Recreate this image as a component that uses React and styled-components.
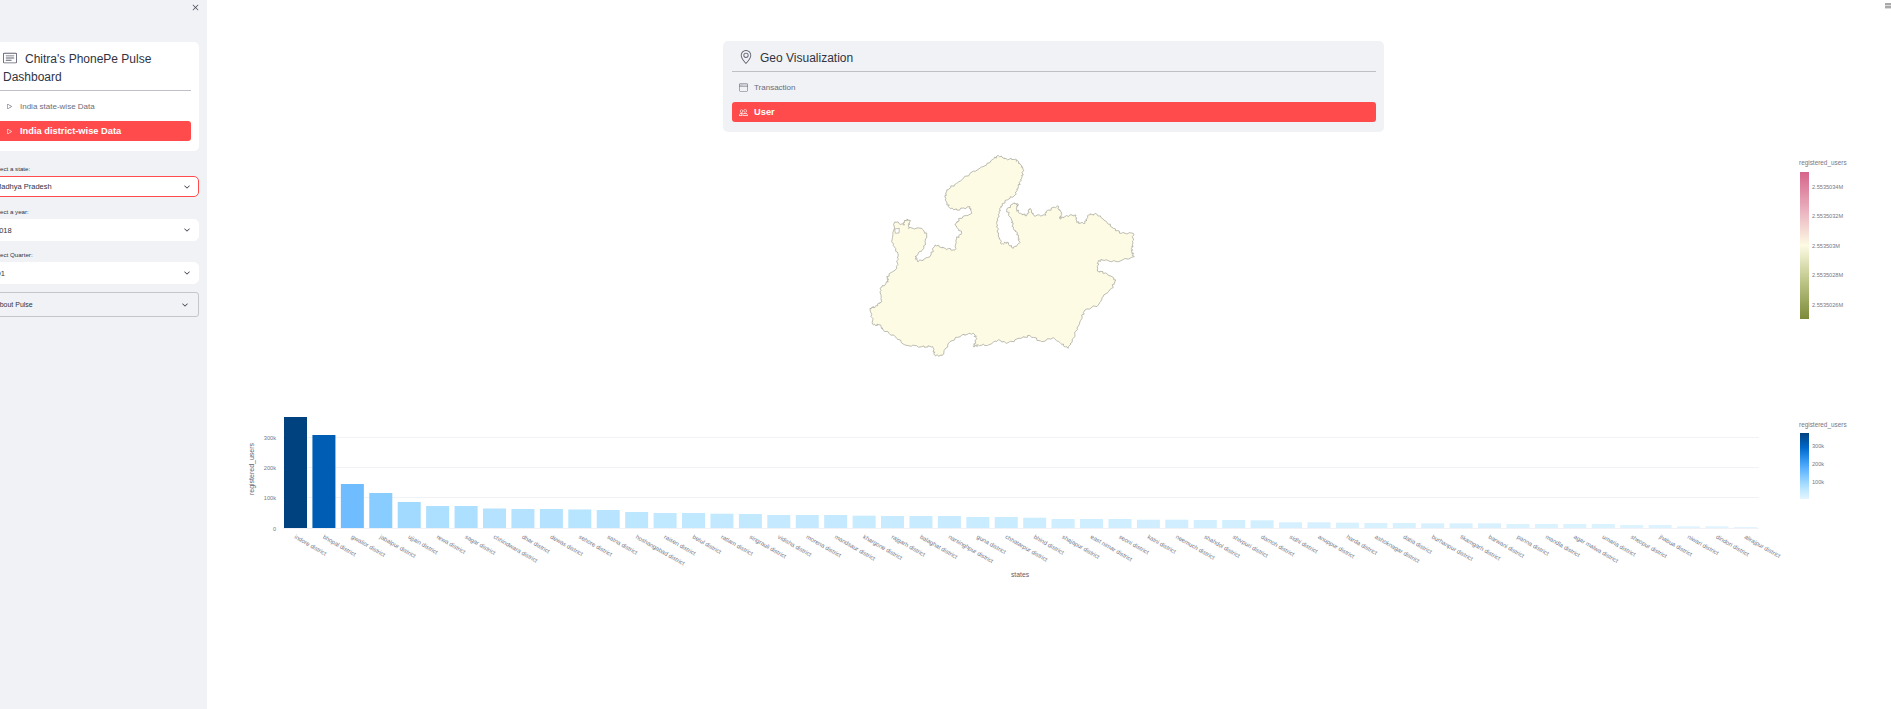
import React from 'react'
import styled, { createGlobalStyle } from 'styled-components'
import { BsCardText, BsChevronDown, BsGeoAlt, BsPeople, BsPlay, BsWindow, BsX } from 'react-icons/bs'

const GlobalStyle = createGlobalStyle`
  html, body {
    margin: 0;
    height: 100%;
    overflow: hidden;
    background: #fff;
    font-family: "Liberation Sans", Arial, sans-serif;
  }
`

const Page = styled.div`
  display: flex;
  width: 1891px;
  height: 709px;
  position: relative;
  overflow: hidden;
  background: #fff;
`

const Sidebar = styled.aside`
  width: 207px;
  flex: none;
  height: 100%;
  background: #f0f2f6;
  overflow: hidden;
`

const CloseRow = styled.div`
  height: 41px;
  padding: 1px 5px 0 0;
  display: flex;
  justify-content: flex-end;
  color: #4a4c58;
  font-size: 13px;
`

const SideInner = styled.div`
  width: 213px;
  margin-left: -14px;
  display: flex;
  flex-direction: column;
`

const MenuCard = styled.div`
  background: #fff;
  border-radius: 5px;
  padding: 8px 8px 10px;
  box-sizing: border-box;
`

const MenuTitle = styled.div`
  color: #31333f;
  font-size: ${p => p.$size}px;
  line-height: 18px;
  padding: 0 0 4px ${p => p.$indent}px;

  svg {
    vertical-align: -2px;
    margin-right: ${p => p.$iconGap}px;
    color: #5f6270;
    font-size: 14px;
  }
`

const Rule = styled.div`
  height: 1px;
  background: #bfc0c6;
  margin-bottom: 5px;
`

const MenuItem = styled.div`
  height: 20px;
  margin-top: ${p => p.$top}px;
  padding-left: ${p => p.$indent}px;
  display: flex;
  align-items: center;
  gap: ${p => p.$gap}px;
  border-radius: 3px;
  font-size: ${p => (p.$active ? 9.3 : 8)}px;
  font-weight: ${p => (p.$active ? 700 : 400)};
  color: ${p => (p.$active ? '#fff' : '#6b6d7a')};
  background: ${p => (p.$active ? '#ff4b4b' : 'transparent')};

  svg {
    font-size: 9px;
    flex: none;
  }
`

const FieldLabel = styled.div`
  font-size: 6.2px;
  line-height: 8px;
  color: #31333f;
  padding-left: 5px;
  margin: ${p => p.$top}px 0 3px;
`

const Select = styled.div`
  height: ${p => p.$height}px;
  box-sizing: border-box;
  background: #fff;
  border: 1px solid ${p => (p.$focus ? '#ff4b4b' : '#fff')};
  border-radius: 5px;
  padding: 0 8px;
  display: flex;
  align-items: center;
  justify-content: space-between;
  font-size: 7.5px;
  color: #31333f;

  svg {
    font-size: 6px;
    stroke: currentColor;
    stroke-width: 1;
  }
`

const Expander = styled(Select)`
  margin-top: 8px;
  background: #f0f2f6;
  border: 1px solid #c4c6cc;
  border-radius: 3px;
  padding-right: 10px;
  font-size: 7px;
`

const Main = styled.main`
  flex: 1;
  min-width: 0;
  display: flex;
  flex-direction: column;
  align-items: flex-start;
`

const GeoMenu = styled(MenuCard)`
  width: 661px;
  height: 91px;
  margin: 41px 0 0 516px;
  padding: 8px 8px 0 9px;
  background: #f0f2f6;
`

const ChartSvg = styled.svg`
  display: block;
  width: 1684px;
  height: ${p => p.$height}px;
  flex: none;
`

const ChartText = styled.text`
  font-family: "Liberation Sans", Arial, sans-serif;
  font-size: ${p => p.$size || 5.6}px;
  fill: ${p => p.$fill || '#767886'};
`

const CornerMenu = styled.div`
  position: absolute;
  top: 3px;
  right: 0;
  width: 6px;
  height: 6px;
  background: repeating-linear-gradient(#a9a9a9 0 2px, #dcdcdc 2px 3px);
`

const blues = ['#e4f5ff', '#c7ebff', '#a6dcff', '#83c9ff', '#60b4ff', '#3d9df3', '#1c83e1', '#0068c9', '#0054a3', '#004280']

const hexRgb = h => [1, 3, 5].map(i => parseInt(h.slice(i, i + 2), 16))

function blueAt(t) {
  const pos = Math.min(Math.max(t, 0), 1) * (blues.length - 1)
  const i = Math.min(Math.floor(pos), blues.length - 2)
  const a = hexRgb(blues[i])
  const b = hexRgb(blues[i + 1])
  const f = pos - i
  return `rgb(${a.map((v, k) => Math.round(v + (b[k] - v) * f)).join(',')})`
}

// district name + top of the bar on the page
const districts = [
  ['indore', 417], ['bhopal', 435], ['gwalior', 484], ['jabalpur', 493], ['ujjain', 502], ['rewa', 506],
  ['sagar', 506], ['chhindwara', 508.5], ['dhar', 509], ['dewas', 509], ['sehore', 509.5], ['satna', 510],
  ['hoshangabad', 512], ['raisen', 513], ['betul', 513], ['ratlam', 513.7], ['singrauli', 514], ['vidisha', 515],
  ['morena', 515], ['mandsaur', 515], ['khargone', 515.7], ['rajgarh', 516], ['balaghat', 516], ['narsinghpur', 516],
  ['guna', 517], ['chhatarpur', 517], ['bhind', 517.7], ['shajapur', 519], ['east nimar', 519], ['seoni', 519],
  ['katni', 519.7], ['neemuch', 519.7], ['shahdol', 520], ['shivpuri', 520], ['damoh', 520.3], ['sidhi', 522.3],
  ['anuppur', 522.3], ['harda', 522.7], ['ashoknagar', 523], ['datia', 523], ['burhanpur', 523.3], ['tikamgarh', 523.3],
  ['barwani', 523.3], ['panna', 524], ['mandla', 524], ['agar malwa', 524], ['umaria', 524], ['sheopur', 525],
  ['jhabua', 525], ['niwari', 526.3], ['dindori', 526.3], ['alirajpur', 527],
]

const outline = [
  [430, 42], [445, 32], [470, 42], [495, 42], [510, 55], [520, 75], [515, 100], [505, 125], [495, 150], [470, 165],
  [452, 185], [448, 205], [440, 235], [445, 270], [455, 297], [470, 292], [490, 310], [508, 295], [505, 270], [490, 250],
  [485, 225], [470, 195], [490, 175], [505, 178], [498, 192], [510, 205], [530, 212], [540, 190], [552, 212], [585, 210], [590, 198],
  [622, 183], [635, 205], [630, 222], [650, 212], [678, 210], [680, 232], [705, 235], [715, 210], [740, 207], [770, 230],
  [790, 250], [815, 265], [850, 265], [848, 300], [845, 320], [852, 335], [800, 350], [755, 345], [745, 350], [742, 378],
  [770, 385], [798, 405], [785, 430], [760, 455], [745, 480], [705, 495], [690, 530], [670, 580], [655, 610], [635, 598],
  [610, 578], [575, 590], [540, 572], [510, 580], [470, 595], [445, 585], [415, 600], [385, 600], [370, 605], [380, 580],
  [370, 565], [335, 570], [300, 590], [275, 632], [255, 632], [248, 605], [215, 605], [165, 600], [135, 575], [100, 555],
  [90, 540], [70, 540], [60, 490], [75, 485], [95, 470], [90, 430], [115, 410], [110, 395], [140, 370], [145, 330],
  [125, 290], [135, 230], [160, 240], [165, 225], [180, 225], [175, 250], [215, 250], [230, 270], [222, 310], [195, 335],
  [205, 350], [240, 335], [255, 300], [285, 310], [315, 315], [320, 280], [335, 265], [315, 240], [330, 220], [365, 205],
  [360, 185], [320, 195], [300, 190], [285, 165], [290, 135], [320, 115], [360, 85], [410, 60],
]

// district borders are wiggly, so break each segment up a little
function wiggle(points) {
  let d = ''
  points.forEach(([x, y], i) => {
    const [nx, ny] = points[(i + 1) % points.length]
    const steps = 6
    for (let s = 0; s < steps; s++) {
      const k = i * steps + s
      const dx = s === 0 ? 0 : Math.sin(k * 2.7) * 2.6
      const dy = s === 0 ? 0 : Math.cos(k * 1.9) * 2.6
      d += `${d ? 'L' : 'M'}${(x + ((nx - x) * s) / steps + dx).toFixed(1)} ${(y + ((ny - y) * s) / steps + dy).toFixed(1)}`
    }
  })
  return d + 'Z'
}

const mapTicks = [
  ['2.5535034M', 187], ['2.5535032M', 216], ['2.553503M', 246], ['2.5535028M', 275], ['2.5535026M', 305],
]

function GeoChart() {
  return (
    <ChartSvg $height={268} viewBox="207 132 1684 268">
      <defs>
        <linearGradient id="curl" x1="0" y1="0" x2="0" y2="1">
          <stop offset="0" stopColor="#d6648a" />
          <stop offset="0.25" stopColor="#e9aebd" />
          <stop offset="0.5" stopColor="#fdfbe4" />
          <stop offset="0.75" stopColor="#bcc485" />
          <stop offset="1" stopColor="#7c8a38" />
        </linearGradient>
      </defs>
      <g transform="translate(850 145) scale(0.3333)">
        <path d={wiggle(outline)} fill="#fdfbe4" stroke="#a5a59b" strokeWidth="2.2" strokeLinejoin="round" />
        <path d="M134 252L148 250L147 264L136 265Z" fill="#fff" stroke="#a5a59b" strokeWidth="2" />
      </g>
      <ChartText x="1799" y="165" $size={6.4}>registered_users</ChartText>
      <rect x="1800" y="172" width="9" height="147" fill="url(#curl)" />
      {mapTicks.map(([label, y]) => (
        <ChartText key={label} x="1812" y={y + 2}>{label}</ChartText>
      ))}
    </ChartSvg>
  )
}

const barTicks = [['300k', 437], ['200k', 467], ['100k', 497], ['0', 528]]

function BarChart() {
  const base = 528
  const max = base - districts[0][1]
  return (
    <ChartSvg $height={200} viewBox="207 400 1684 200">
      <defs>
        <linearGradient id="blues" x1="0" y1="1" x2="0" y2="0">
          {blues.map((c, i) => (
            <stop key={c} offset={i / (blues.length - 1)} stopColor={c} />
          ))}
        </linearGradient>
      </defs>
      {barTicks.map(([label, y]) => (
        <g key={label}>
          <line x1="283" x2="1759" y1={y + 0.5} y2={y + 0.5} stroke="#f0f2f6" />
          <ChartText x="276" y={y + 2.5} textAnchor="end">{label}</ChartText>
        </g>
      ))}
      {districts.map(([name, top], i) => {
        const x = 284 + i * 28.43
        return (
          <g key={name}>
            <rect x={x} y={top} width="23" height={base - top} fill={blueAt((base - top) / max)} />
            <ChartText x={x + 10} y="538" $size={6} transform={`rotate(30 ${x + 10} 538)`}>{name} district</ChartText>
          </g>
        )
      })}
      <ChartText x="254" y="469" $size={7} textAnchor="middle" transform="rotate(-90 254 469)" $fill="#5f616e">registered_users</ChartText>
      <ChartText x="1020" y="577" $size={6.8} textAnchor="middle" $fill="#5f616e">states</ChartText>
      <ChartText x="1799" y="427" $size={6.4}>registered_users</ChartText>
      <rect x="1800" y="433" width="9" height="66" fill="url(#blues)" />
      {barTicks.slice(0, 3).map(([label], i) => (
        <ChartText key={label} x="1812" y={448 + i * 18}>{label}</ChartText>
      ))}
    </ChartSvg>
  )
}

export default function App() {
  return (
    <Page>
      <GlobalStyle />
      <Sidebar>
        <CloseRow><BsX /></CloseRow>
        <SideInner>
          <MenuCard>
            <MenuTitle $size={12} $indent={9} $iconGap={8}>
              <BsCardText />Chitra's PhonePe Pulse Dashboard
            </MenuTitle>
            <Rule />
            <MenuItem $top={0} $indent={11} $gap={6}><BsPlay />India state-wise Data</MenuItem>
            <MenuItem $top={5} $indent={11} $gap={6} $active><BsPlay />India district-wise Data</MenuItem>
          </MenuCard>
          <FieldLabel $top={14}>Select a state:</FieldLabel>
          <Select $height={21} $focus>Madhya Pradesh<BsChevronDown /></Select>
          <FieldLabel $top={11}>Select a year:</FieldLabel>
          <Select $height={22}>2018<BsChevronDown /></Select>
          <FieldLabel $top={10}>Select Quarter:</FieldLabel>
          <Select $height={22}>Q1<BsChevronDown /></Select>
          <Expander $height={25}>About Pulse<BsChevronDown /></Expander>
        </SideInner>
      </Sidebar>
      <Main>
        <GeoMenu>
          <MenuTitle $size={12} $indent={7} $iconGap={7}>
            <BsGeoAlt />Geo Visualization
          </MenuTitle>
          <Rule />
          <MenuItem $top={0} $indent={7} $gap={6}><BsWindow />Transaction</MenuItem>
          <MenuItem $top={5} $indent={7} $gap={6} $active><BsPeople />User</MenuItem>
        </GeoMenu>
        <GeoChart />
        <BarChart />
      </Main>
      <CornerMenu />
    </Page>
  )
}
